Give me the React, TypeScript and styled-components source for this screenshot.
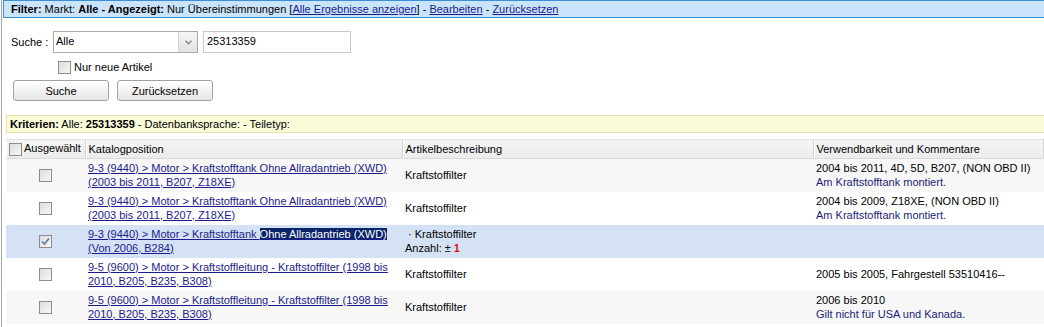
import styled, { createGlobalStyle } from "styled-components";

const GlobalStyle = createGlobalStyle`
  html, body { margin: 0; padding: 0; background: #fff; }
  body {
    font-family: "Liberation Sans", Arial, sans-serif;
    font-size: 11px;
    color: #000;
  }
`;

const Page = styled.div`
  margin-left: 1px;
  border-left: 1px solid #a3a3a3;
  min-height: 327px;
  overflow: hidden;
`;

const FilterBar = styled.div`
  margin-left: 1px;
  height: 16px;
  line-height: 16px;
  padding-left: 7px;
  background: #c9e4fb;
  border: 1px solid #3b8fd7;
  border-right: 0;
  white-space: nowrap;
`;

const Link = styled.a`
  color: #1b1b8c;
  text-decoration: underline;
  cursor: pointer;
`;

const SearchForm = styled.div`
  padding: 13px 0 0 9px;
`;

const FieldRow = styled.div`
  display: flex;
  align-items: center;
  height: 22px;
`;

const Label = styled.span`
  width: 42px;
`;

const Select = styled.div`
  box-sizing: border-box;
  width: 145px;
  height: 22px;
  border: 1px solid #a5a9b0;
  display: flex;
  align-items: stretch;
`;

const SelectValue = styled.span`
  flex: 1;
  padding: 3px 0 0 2px;
`;

const SelectArrow = styled.span`
  width: 18px;
  border-left: 1px solid #cfcfcf;
  background: linear-gradient(#f7f7f7, #e2e2e2);
  display: flex;
  align-items: center;
  justify-content: center;
`;

const TextInput = styled.div`
  box-sizing: border-box;
  margin-left: 5px;
  width: 148px;
  height: 22px;
  border: 1px solid #c9c9c9;
  padding: 3px 0 0 3px;
`;

const CheckRow = styled.label`
  display: flex;
  align-items: center;
  gap: 3px;
  margin-top: 7px;
  padding-left: 47px;
  height: 14px;
`;

const Box = styled.span<{ $checked?: boolean }>`
  box-sizing: border-box;
  width: 13px;
  height: 13px;
  border: 1px solid #8d8d8d;
  background: linear-gradient(135deg, #dcdcdc, #f8f8f8);
  display: inline-flex;
  align-items: center;
  justify-content: center;
  vertical-align: middle;
`;

const ButtonRow = styled.div`
  display: flex;
  gap: 8px;
  margin-top: 6px;
  padding-left: 2px;
`;

const Button = styled.button`
  box-sizing: border-box;
  width: 96px;
  height: 21px;
  border: 1px solid #a2a2a2;
  border-radius: 3px;
  background: linear-gradient(#ffffff, #e6e6e6);
  font: inherit;
  color: #000;
  padding: 0;
`;

const CriteriaBar = styled.div`
  margin: 14px 0 0 4px;
  height: 16px;
  line-height: 16px;
  padding-left: 3px;
  background: #fbfbda;
  border: 1px solid #e7e3a8;
  border-right: 0;
  white-space: nowrap;
`;

const Table = styled.table`
  margin: 6px 0 0 4px;
  width: 1038px;
  border-collapse: collapse;
  table-layout: fixed;
`;

const Th = styled.th`
  height: 18px;
  padding: 0 3px;
  text-align: left;
  font-weight: normal;
  background: linear-gradient(#f5f5f5, #ececec);
  border-top: 1px solid #e4e4e4;
  border-bottom: 1px solid #d9d9d9;
  border-right: 1px solid #d3d3d3;
  box-shadow: inset 1px 0 0 #fff;
  white-space: nowrap;
  vertical-align: middle;
`;

const HeadCheck = styled.span`
  margin-right: 2px;
`;

const Tr = styled.tr<{ $tone: "gray" | "white" | "selected" }>`
  background: ${(p) =>
    p.$tone === "selected" ? "#d5e2f5" : p.$tone === "gray" ? "#f7f7f7" : "#fff"};
`;

const Td = styled.td<{ $center?: boolean; $top?: boolean }>`
  padding: 3px 3px 3px;
  line-height: 13.5px;
  vertical-align: ${(p) => (p.$top ? "top" : "middle")};
  text-align: ${(p) => (p.$center ? "center" : "left")};
`;

const Marked = styled.span`
  background: #0a246a;
  color: #fff;
`;

const Note = styled.span`
  color: #1c1c78;
`;

const Count = styled.b`
  color: #e01010;
`;

function CheckBox({ checked }: { checked?: boolean }) {
  return (
    <Box $checked={checked}>
      {checked && (
        <svg width="9" height="9" viewBox="0 0 9 9">
          <path d="M1 4.5 L3.5 7 L8 1.5" fill="none" stroke="#5a78a8" strokeWidth="1.6" />
        </svg>
      )}
    </Box>
  );
}

type Row = {
  tone: "gray" | "white" | "selected";
  checked?: boolean;
  link: React.ReactNode;
  desc: React.ReactNode;
  use?: string;
  note?: string;
};

const rows: Row[] = [
  {
    tone: "gray",
    link: (
      <>
        9-3 (9440) &gt; Motor &gt; Kraftstofftank Ohne Allradantrieb (XWD)
        <br />
        (2003 bis 2011, B207, Z18XE)
      </>
    ),
    desc: "Kraftstoffilter",
    use: "2004 bis 2011, 4D, 5D, B207, (NON OBD II)",
    note: "Am Kraftstofftank montiert.",
  },
  {
    tone: "white",
    link: (
      <>
        9-3 (9440) &gt; Motor &gt; Kraftstofftank Ohne Allradantrieb (XWD)
        <br />
        (2003 bis 2011, B207, Z18XE)
      </>
    ),
    desc: "Kraftstoffilter",
    use: "2004 bis 2009, Z18XE, (NON OBD II)",
    note: "Am Kraftstofftank montiert.",
  },
  {
    tone: "selected",
    checked: true,
    link: (
      <>
        9-3 (9440) &gt; Motor &gt; Kraftstofftank <Marked>Ohne Allradantrieb (XWD)</Marked>
        <br />
        (Von 2006, B284)
      </>
    ),
    desc: (
      <>
        {"\u00a0·\u00a0Kraftstoffilter"}
        <br />
        Anzahl: ± <Count>1</Count>
      </>
    ),
  },
  {
    tone: "white",
    link: (
      <>
        9-5 (9600) &gt; Motor &gt; Kraftstoffleitung - Kraftstoffilter (1998 bis
        <br />
        2010, B205, B235, B308)
      </>
    ),
    desc: "Kraftstoffilter",
    use: "2005 bis 2005, Fahrgestell 53510416--",
  },
  {
    tone: "gray",
    link: (
      <>
        9-5 (9600) &gt; Motor &gt; Kraftstoffleitung - Kraftstoffilter (1998 bis
        <br />
        2010, B205, B235, B308)
      </>
    ),
    desc: "Kraftstoffilter",
    use: "2006 bis 2010",
    note: "Gilt nicht für USA und Kanada.",
  },
];

export default function App() {
  return (
    <Page>
      <GlobalStyle />
      <FilterBar>
        <b>Filter:</b> Markt: <b>Alle - Angezeigt:</b> Nur Übereinstimmungen [
        <Link>Alle Ergebnisse anzeigen</Link>] - <Link>Bearbeiten</Link> -{" "}
        <Link>Zurücksetzen</Link>
      </FilterBar>

      <SearchForm>
        <FieldRow>
          <Label>Suche :</Label>
          <Select>
            <SelectValue>Alle</SelectValue>
            <SelectArrow>
              <svg width="7" height="5" viewBox="0 0 7 5">
                <path d="M0.5 0.8 L3.5 3.8 L6.5 0.8" fill="none" stroke="#8a8a8a" strokeWidth="1.4" />
              </svg>
            </SelectArrow>
          </Select>
          <TextInput>25313359</TextInput>
        </FieldRow>
        <CheckRow>
          <CheckBox />
          Nur neue Artikel
        </CheckRow>
        <ButtonRow>
          <Button>Suche</Button>
          <Button>Zurücksetzen</Button>
        </ButtonRow>
      </SearchForm>

      <CriteriaBar>
        <b>Kriterien:</b> Alle: <b>25313359</b> - Datenbanksprache: - Teiletyp:
      </CriteriaBar>

      <Table>
        <colgroup>
          <col style={{ width: 79 }} />
          <col style={{ width: 317 }} />
          <col style={{ width: 411 }} />
          <col />
        </colgroup>
        <thead>
          <tr>
            <Th>
              <HeadCheck>
                <CheckBox />
              </HeadCheck>
              Ausgewählt
            </Th>
            <Th>Katalogposition</Th>
            <Th>Artikelbeschreibung</Th>
            <Th>Verwendbarkeit und Kommentare</Th>
          </tr>
        </thead>
        <tbody>
          {rows.map((r, i) => (
            <Tr key={i} $tone={r.tone}>
              <Td $center>
                <CheckBox checked={r.checked} />
              </Td>
              <Td>
                <Link>{r.link}</Link>
              </Td>
              <Td $top={r.tone === "selected"}>{r.desc}</Td>
              <Td>
                {r.use}
                {r.note && (
                  <>
                    <br />
                    <Note>{r.note}</Note>
                  </>
                )}
              </Td>
            </Tr>
          ))}
        </tbody>
      </Table>
    </Page>
  );
}
